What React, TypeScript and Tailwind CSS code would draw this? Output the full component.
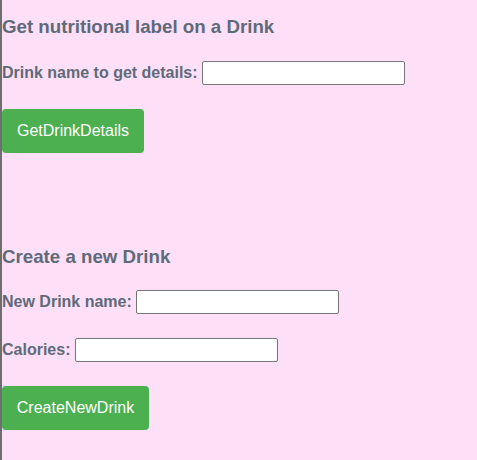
export default function App() {
    return (
        <div className="min-h-[460px] w-full bg-[#fde0f8] border-l-2 border-[#6e6e6e] font-['Liberation_Sans',Arial,sans-serif] text-[#5f6a78] flex flex-col items-start">
            <h3 className="mt-[16px] text-[18.72px] leading-[22px] font-bold">Get nutritional label on a Drink</h3>
            <div className="mt-[23px] flex flex-row items-center gap-[4px]">
                <label className="text-[16px] leading-[18px] font-bold">Drink name to get details:</label>
                <input type="text" className="w-[203px] h-[24px] bg-white border border-[#767676] rounded-[2px] px-[2px] text-[13px]" />
            </div>
            <button className="mt-[24px] w-[142px] h-[44px] bg-[#4caf50] text-white text-[16px] rounded-[4px]">GetDrinkDetails</button>

            <h3 className="mt-[93px] text-[18.72px] leading-[22px] font-bold">Create a new Drink</h3>
            <div className="mt-[22px] flex flex-row items-center gap-[4px]">
                <label className="text-[16px] leading-[18px] font-bold">New Drink name:</label>
                <input type="text" className="w-[203px] h-[24px] bg-white border border-[#767676] rounded-[2px] px-[2px] text-[13px]" />
            </div>
            <div className="mt-[24px] flex flex-row items-center gap-[5px]">
                <label className="text-[16px] leading-[18px] font-bold">Calories:</label>
                <input type="text" className="w-[203px] h-[24px] bg-white border border-[#767676] rounded-[2px] px-[2px] text-[13px]" />
            </div>
            <button className="mt-[24px] w-[147px] h-[44px] bg-[#4caf50] text-white text-[16px] rounded-[4px]">CreateNewDrink</button>
        </div>
    );
}
